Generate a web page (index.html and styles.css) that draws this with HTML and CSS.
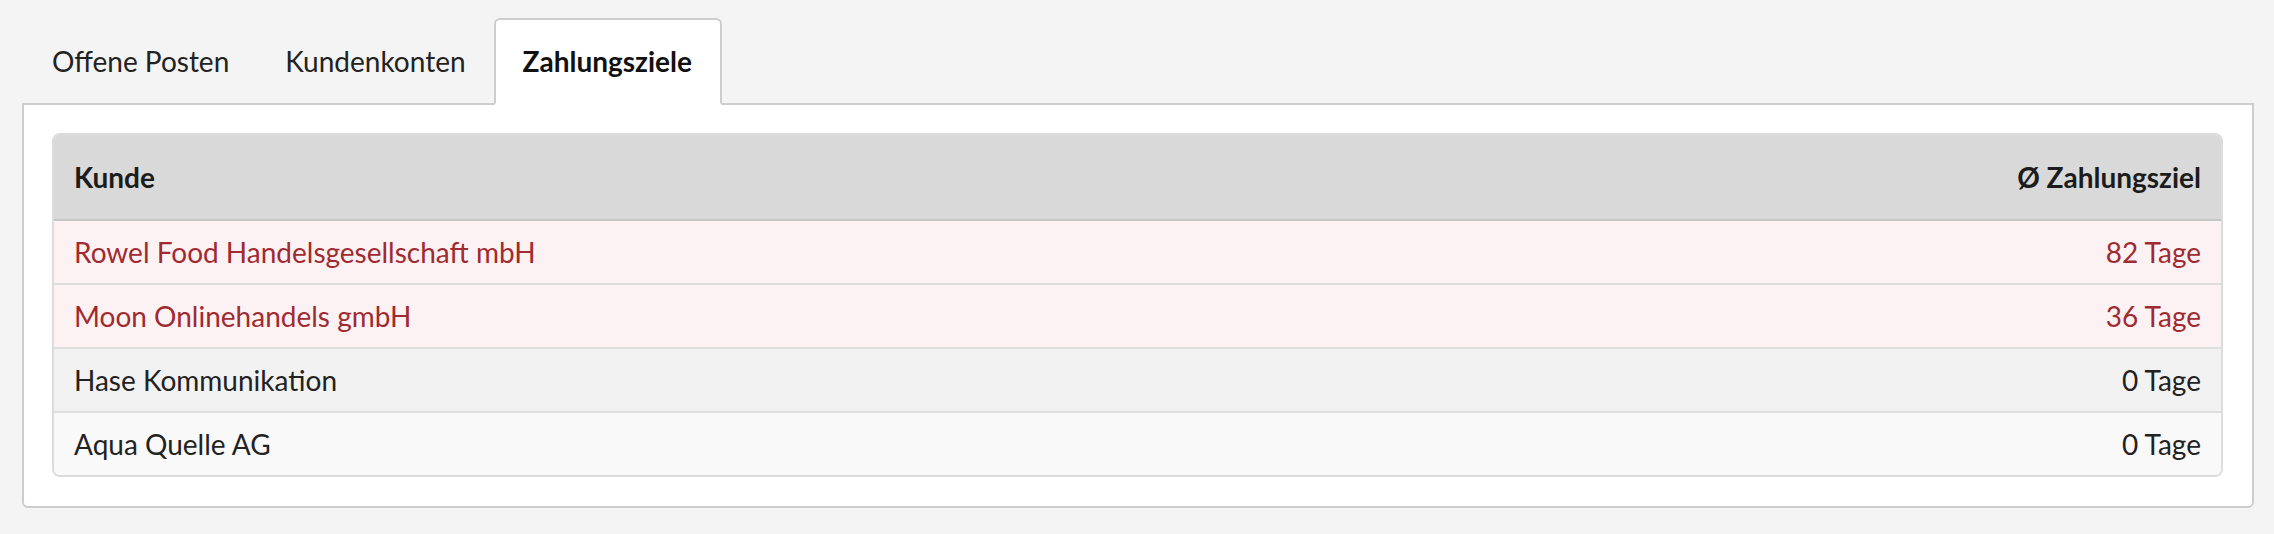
FILE: index.html
```html
<!DOCTYPE html>
<html lang="de">
<head>
<meta charset="utf-8">
<title>Zahlungsziele</title>
<link rel="stylesheet" href="styles.css">
</head>
<body>
<div class="page">
  <ul class="tabs">
    <li class="tab">Offene Posten</li>
    <li class="tab">Kundenkonten</li>
    <li class="tab tab-active">Zahlungsziele</li>
  </ul>
  <div class="panel">
    <div class="table-wrap">
      <table class="grid">
        <thead>
          <tr>
            <th class="col-name">Kunde</th>
            <th class="col-num">Ø Zahlungsziel</th>
          </tr>
        </thead>
        <tbody>
          <tr class="row-danger">
            <td class="col-name">Rowel Food Handelsgesellschaft mbH</td>
            <td class="col-num">82 Tage</td>
          </tr>
          <tr class="row-danger">
            <td class="col-name">Moon Onlinehandels gmbH</td>
            <td class="col-num">36 Tage</td>
          </tr>
          <tr class="row-odd">
            <td class="col-name">Hase Kommunikation</td>
            <td class="col-num">0 Tage</td>
          </tr>
          <tr class="row-even">
            <td class="col-name">Aqua Quelle AG</td>
            <td class="col-num">0 Tage</td>
          </tr>
        </tbody>
      </table>
    </div>
  </div>
</div>
</body>
</html>
```

FILE: styles.css
```css
html, body {
  margin: 0;
  padding: 0;
}

body {
  background: #f4f4f4;
  font-family: Lato, "Open Sans", "Liberation Sans", sans-serif;
  font-size: 28px;
  color: #222;
}

.page {
  padding: 18px 20px 0 22px;
}

.tabs {
  list-style: none;
  margin: 0;
  padding: 0 0 0 2px;
  display: flex;
}

.tab {
  padding: 24px 26px 25px;
  line-height: 34px;
  border: 2px solid transparent;
  border-radius: 6px 6px 0 0;
  margin-bottom: -2px;
  color: #222;
  position: relative;
  z-index: 1;
}

.tab-active {
  background: #fff;
  border-color: #cdcdcd;
  border-bottom-color: #fff;
  font-weight: bold;
  color: #111;
  padding-left: 27px;
  padding-right: 28px;
}

.panel {
  background: #fff;
  border: 2px solid #cdcdcd;
  border-radius: 0 0 6px 6px;
  padding: 28px 29px 29px 28px;
}

.table-wrap {
  border: 2px solid #dcdcdc;
  border-radius: 8px;
  overflow: hidden;
}

.grid {
  width: 100%;
  border-collapse: separate;
  border-spacing: 0;
}

.grid th,
.grid td {
  line-height: 34px;
  padding: 14px 20px 14px 20px;
  border-bottom: 2px solid #dedede;
  white-space: nowrap;
}

.grid th {
  background: #d9d9d9;
  font-weight: bold;
  color: #1c1c1c;
  padding-top: 25px;
  padding-bottom: 25px;
  border-bottom-color: #c6c6c6;
}

.grid tbody tr:last-child td {
  border-bottom: none;
}

.col-name {
  text-align: left;
}

.col-num {
  text-align: right;
}

.row-danger td {
  background: #fcf2f3;
  color: #a12a30;
}

.row-odd td {
  background: #f2f2f2;
}

.row-even td {
  background: #f9f9f9;
}
```
